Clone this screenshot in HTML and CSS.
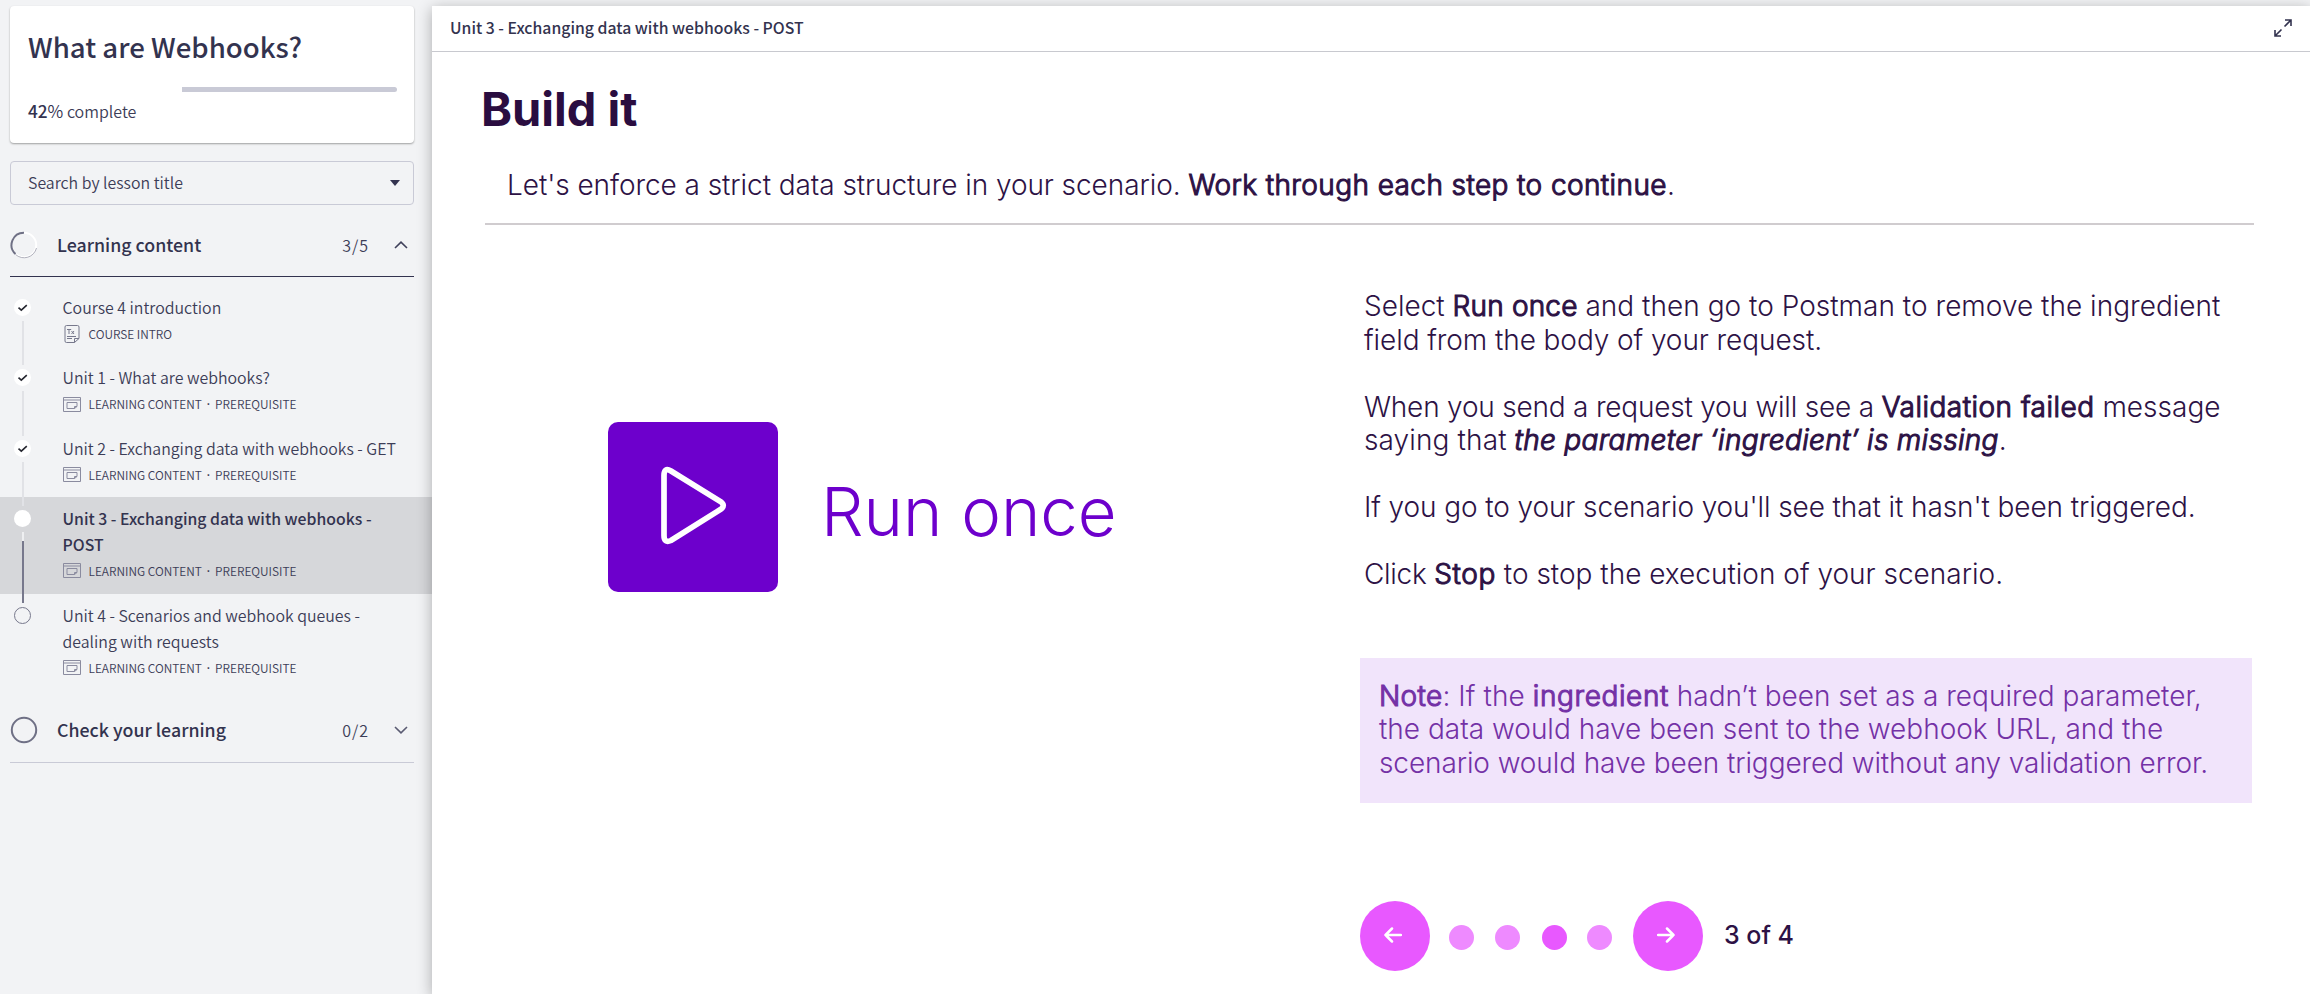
FILE: index.html
```html
<!DOCTYPE html>
<html lang="en">
<head>
<meta charset="utf-8">
<title>What are Webhooks?</title>
<link rel="stylesheet" href="styles.css">
</head>
<body>
<svg class="defs" aria-hidden="true">
  <symbol id="check" viewBox="0 0 17 17"><path d="M4.5 8.6l2.800 2.500 5.500-5" fill="none" stroke="#25262f" stroke-width="1.600"/></symbol>
  <symbol id="lesson" viewBox="0 0 18 15"><g fill="none" stroke="#8a8b9f"><path d="M.5.5h17v14H.5zM.5 3h17"/><path d="M14 9.500V5.500H4v6h7.500zM11.500 11.500V9.500H14"/></g></symbol>
  <symbol id="doc" viewBox="0 0 18 18"><g fill="none" stroke="#77788c"><path d="M11.500 17.500h-8a1.500 1.500 0 0 1-1.500-1.500V2A1.500 1.500 0 0 1 3.500.5h11A1.500 1.500 0 0 1 16 2v11.500zM11.500 17.500v-4H16M4 11.500h9M4 13.500h5"/><path d="M4 4.500h4.200M6 4.500V9M8.500 6l2.500 3M11 6L8.500 9"/></g></symbol>
</svg>
<div class="app">
  <aside class="sidebar">
    <section class="card">
      <h1>What are Webhooks?</h1>
      <div class="bar"><i></i></div>
      <p><span class="percent"><b>42</b>%</span> complete</p>
    </section>
    <div class="search"><span>Search by lesson title</span><svg width="10" height="6"><path d="M0 0h10L5 6z" fill="#33334f"/></svg></div>
    <div class="group open">
      <svg width="28" height="28"><circle cx="14" cy="14" r="12.200" fill="none" stroke="#fff" stroke-width="2"/><path d="M14 1.700A12.300 12.300 0 0 0 5.500 23" fill="none" stroke="#6f7085" stroke-width="2"/><path d="M5.500 23.500a12.800 12.800 0 0 0 21-6.500" fill="none" stroke="#9a9baa" stroke-width=".8"/></svg>
      <h2>Learning content</h2><em>3/5</em>
      <svg width="14" height="8"><path d="M1 7l6-5.800L13 7" fill="none" stroke="#3f405a" stroke-width="1.600"/></svg>
    </div>
    <ul class="lessons">
      <li><div class="rail"><svg class="dot"><use href="#check"/></svg><i></i></div>
        <div class="text"><h3>Course 4 introduction</h3><p><svg width="18" height="18"><use href="#doc"/></svg><span>COURSE INTRO</span></p></div></li>
      <li><div class="rail"><svg class="dot"><use href="#check"/></svg><i></i></div>
        <div class="text"><h3>Unit 1 - What are webhooks?</h3><p><svg width="18" height="15"><use href="#lesson"/></svg><span>LEARNING CONTENT<s>·</s>PREREQUISITE</span></p></div></li>
      <li><div class="rail"><svg class="dot"><use href="#check"/></svg><i></i></div>
        <div class="text"><h3>Unit 2 - Exchanging data with webhooks - GET</h3><p><svg width="18" height="15"><use href="#lesson"/></svg><span>LEARNING CONTENT<s>·</s>PREREQUISITE</span></p></div></li>
      <li class="current"><div class="rail"><span class="dot"></span><i></i></div>
        <div class="text"><h3>Unit 3 - Exchanging data with webhooks -<br>POST</h3><p><svg width="18" height="15"><use href="#lesson"/></svg><span>LEARNING CONTENT<s>·</s>PREREQUISITE</span></p></div></li>
      <li class="todo"><div class="rail"><span class="dot"></span></div>
        <div class="text"><h3>Unit 4 - Scenarios and webhook queues -<br>dealing with requests</h3><p><svg width="18" height="15"><use href="#lesson"/></svg><span>LEARNING CONTENT<s>·</s>PREREQUISITE</span></p></div></li>
    </ul>
    <div class="group">
      <svg width="28" height="28"><circle cx="14" cy="14" r="12.200" fill="none" stroke="#6f7085" stroke-width="2"/></svg>
      <h2>Check your learning</h2><em>0/2</em>
      <svg width="14" height="8"><path d="M1 1l6 5.800L13 1" fill="none" stroke="#5a5b72" stroke-width="1.600"/></svg>
    </div>
  </aside>
  <main class="player">
    <header class="top"><span>Unit 3 - Exchanging data with webhooks - POST</span>
      <svg width="18" height="18"><path d="M10.500 7.500L17 1M11 1h6v6M7.500 10.500L1 17M1 11v6h6" fill="none" stroke="#33334f" stroke-width="1.600"/></svg></header>
    <div class="slide">
      <h1>Build it</h1>
      <p class="lead"><span class="t-07">Let's enforce a strict data structure in your scenario.</span> <b class="w40">Work through each step to continue</b>.</p>
      <div class="cols">
        <div class="run">
          <svg width="170" height="170"><rect width="170" height="170" rx="10" fill="#6d00cc"/><path d="M56 53.500Q56 45 63 49L112.500 79.500Q118 83.500 112.500 87.500L63 118.500Q56 121.500 56 113.500z" fill="none" stroke="#fff" stroke-width="5.700"/></svg>
          <span>Run once</span>
        </div>
        <div class="copy">
          <p>Select <b class="w15">Run once</b> <span class="w02">and then go to Postman to remove the ingredient</span><br><span class="t-08">field from the body of your request.</span></p>
          <p><span class="t-21">When you send a request you will see a</span> <b class="w48">Validation failed</b> message<br><span class="w12">saying that</span> <b class="it w30">the parameter ‘ingredient’ is missing</b>.</p>
          <p><span class="t-10">If you go to your scenario you'll see that it hasn't been triggered.</span></p>
          <p><span class="t-30">Click</span> <b class="w60">Stop</b> to stop the execution of your scenario.</p>
          <div class="note"><b class="w30">Note</b>: <span class="w12">If the</span> <b class="w60">ingredient</b> hadn’t been set as a required parameter,<br>the data would have been sent to the webhook URL, and the<br><span class="t-09">scenario would have been triggered without any validation error.</span></div>
          <nav class="pager">
            <a class="btn"><svg width="18" height="16"><path d="M17 8H1.500M8 1.500L1.500 8 8 14.500"/></svg></a>
            <i></i><i class="second"></i><i class="on"></i><i></i>
            <a class="btn next"><svg width="18" height="16"><path d="M1 8h15.500M10 1.500L16.500 8 10 14.500"/></svg></a>
            <span class="count">3 of 4</span>
          </nav>
        </div>
      </div>
    </div>
  </main>
</div>
</body>
</html>
```
FILE: styles.css
```css
* { box-sizing: border-box; margin: 0; padding: 0; }
body { background: #f2f3f5; color: #3c3d57; font-family: "Noto Sans CJK SC", sans-serif; overflow: hidden; }
.defs { display: none; }
.app { display: flex; height: 994px; padding-top: 6px; }
h1, h2, h3, em { font-weight: 500; font-style: normal; }
b { font-weight: 500; }

/* Sidebar */
.sidebar { width: 432px; flex: none; }
.card { margin-left: 10px; width: 404px; height: 137px; padding: 20px 17px 0 18px; background: #fff; border-radius: 4px; box-shadow: 0 1px 2px rgba(0, 0, 0, .35); }
.card h1 { font-size: 27.600px; line-height: 40px; color: #33334f; white-space: nowrap; }
.bar { height: 5px; margin: 21px 0 6px; display: flex; justify-content: flex-end; }
.bar i { width: 215px; background: #c9cad6; border-radius: 0 3px 3px 0; }
.card p { font-size: 16px; line-height: 26px; font-weight: 350; }
.percent { font-size: 17.200px; color: #33334f; }
.search { margin: 18px 0 0 10px; width: 404px; height: 44px; border: 1px solid #c9cad6; border-radius: 4px; display: flex; align-items: center; justify-content: space-between; padding: 0 13px 0 17px; font-size: 15.900px; font-weight: 350; }
.search span { margin-bottom: 2px; }
.group { margin-left: 10px; width: 404px; height: 72px; padding: 8px 6px 0 0; display: flex; align-items: center; border-bottom: 1px solid #c9cad6; }
.group.open { border-color: #33334f; }
.group h2 { margin: 0 0 2px 19px; flex: 1; font-size: 17.800px; line-height: 26px; color: #33334f; }
.group em { font-size: 16px; font-weight: 350; letter-spacing: 1px; margin-right: 25px; }

.lessons { list-style: none; margin-top: 9px; }
.lessons li { display: flex; height: 70.330px; }
.rail { width: 62.500px; padding: 13px 0 0 14px; position: relative; z-index: 1; display: flex; flex-direction: column; gap: 5px; }
.dot { width: 17px; height: 17px; border-radius: 50%; background: #fff; flex: none; }
.rail i { width: 2px; margin: 0 0 -9px 8px; flex: 1; background: #e1e2e6; }
.text { padding-top: 9px; white-space: nowrap; }
.text h3 { font-size: 15.900px; line-height: 26px; font-weight: 350; }
.text p { display: flex; align-items: center; gap: 8px; margin-top: 3px; font-size: 11.900px; line-height: 20px; font-weight: 350; }
.text s { font-family: "Open Sans", sans-serif; font-weight: 600; text-decoration: none; margin: 0 5px; }
.lessons .current, .lessons .todo { height: 97px; }
.lessons .current { background: #d6d7da; }
.current .text h3 { font-size: 15.800px; font-weight: 500; color: #33334f; }
.current .rail i { background: linear-gradient(#eeeff1 9px, #77788c 9px); }
.todo .dot { background: none; border: 1px solid #77788c; }

/* Lesson player */
.player { flex: 1; background: #fff; box-shadow: 0 3px 14px rgba(0, 0, 0, .3); position: relative; z-index: 2; }
.top { height: 46px; padding: 0 18px 2px 18px; display: flex; align-items: center; justify-content: space-between; border-bottom: 1px solid #c8c9cf; font-size: 15.800px; font-weight: 500; color: #33334f; }
.slide { font-family: Inter, sans-serif; color: #2d1245; font-weight: 300; font-size: 28px; white-space: nowrap; }
.slide h1 { margin: 26px 0 0 49px; font-size: 47px; line-height: 62px; font-weight: 700; color: #2a0d40; }
.slide b { font-weight: 300; -webkit-text-stroke: 1.100px currentColor; }
.lead { margin-left: 75px; padding-top: 26px; line-height: 38px; }
.cols { margin-left: 53px; width: 1769px; border-top: 2px solid #d0cccf; display: flex; justify-content: space-between; margin-top: 19px; }
.run { display: flex; margin: 197px 0 0 123px; gap: 43px; height: 170px; }
.run span { font-size: 67px; font-weight: 300; color: #6d00cc; line-height: 180px; }
.copy { width: 892px; padding-top: 65px; line-height: 33.500px; margin-right: 2px; }
.copy p { margin: 0 0 33.500px 4px; }
.it { font-style: italic; }
.note { margin-top: 66px; height: 145px; background: #f1e4fb; color: #7431a6; padding: 22px 19px; }

/* Tracking per run of text */
.t-07 { letter-spacing: -.07px; }
.t-08 { letter-spacing: -.08px; }
.t-09 { letter-spacing: -.1px; }
.t-10 { letter-spacing: -.1px; }
.t-21 { letter-spacing: -.21px; }
.t-30 { letter-spacing: -.3px; }
.w02 { letter-spacing: .02px; }
.w12 { letter-spacing: .12px; }
.w15 { letter-spacing: .18px; }
.w30 { letter-spacing: .3px; }
.w40 { letter-spacing: .4px; }
.w48 { letter-spacing: .48px; }
.w60 { letter-spacing: .6px; }

.pager { margin-top: 98px; display: flex; align-items: center; }
.btn { width: 70px; height: 70px; padding: 0 4px 1px 0; border-radius: 50%; background: #e858ff; display: flex; align-items: center; justify-content: center; margin-right: 19px; }
.btn.next { margin: 0 21px 0 .5px; }
.btn path { fill: none; stroke: #fff; stroke-width: 2.500; stroke-linecap: round; stroke-linejoin: round; }
.pager i { width: 25px; height: 25px; border-radius: 50%; background: #ee8aff; margin: 3px 20.500px 0 0; }
.pager .second { margin-right: 22px; }
.pager .on { background: #e858ff; }
.pager .count { font-size: 25px; font-weight: 500; }
```
